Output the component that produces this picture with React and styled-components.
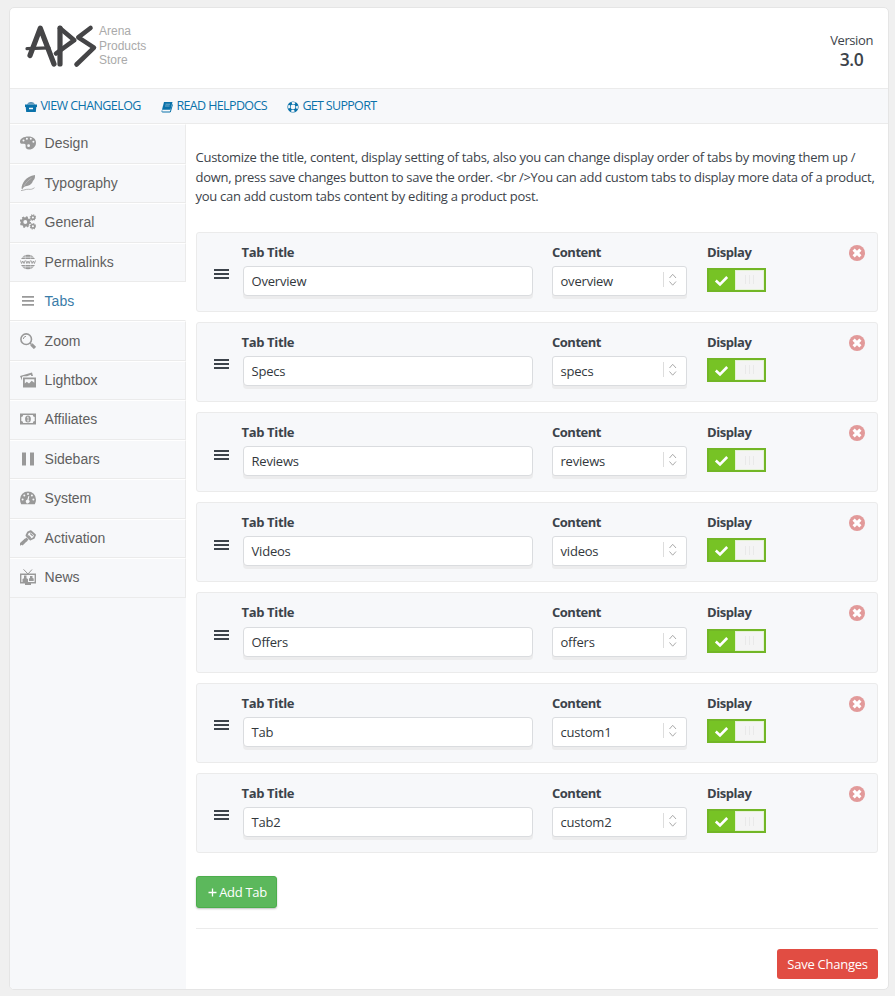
import React from 'react';
import styled, {createGlobalStyle} from 'styled-components';

const sans = `'Segoe UI', 'Open Sans', 'Noto Sans', sans-serif`;
const arial = `'Liberation Sans', Arial, sans-serif`;

const colors = {
  page: '#f0f0f0',
  panel: '#f7f8fa',
  line: '#ebebeb',
  text: '#3c434a',
  link: '#0a72aa',
  icon: '#999',
  green: '#77c325',
  red: '#e14d43',
};

const GlobalStyle = createGlobalStyle`
  *{box-sizing:border-box;}
  body{
    margin:0;
    background:${colors.page};
    color:${colors.text};
    font:13px/1.5 ${sans};
  }
`

const Panel = styled.div `
  width:880px;
  height:983px;
  margin:7px 0 6px 9px;
  background:#fff;
  border:1px solid #e5e5e5;
  border-radius:5px;
  overflow:hidden;
  display:flex;
  flex-direction:column;
`
const Head = styled.header `
  height:81px;
  flex:none;
  border-bottom:1px solid ${colors.line};
  display:flex;
  justify-content:space-between;
  padding:14px 15px 0 14px;
`
const Brand = styled.div `
  display:flex;
  svg{display:block;}
`
const BrandName = styled.div `
  font:12px/14.6px ${arial};
  color:#aaa;
  padding:2px 0 0 1px;
  span{display:block;}
`
const Version = styled.div `
  text-align:center;
  padding-top:8px;
  line-height:20px;
  letter-spacing:-0.4px;
  strong{
    display:block;
    font-size:17.5px;
    line-height:18px;
    font-weight:600;
  }
`
const Links = styled.nav `
  height:35px;
  flex:none;
  background:${colors.panel};
  border-bottom:1px solid ${colors.line};
  display:flex;
  padding:0 0 0 15px;
`
const Link = styled.a `
  display:flex;
  align-items:center;
  width:${p => p.$w}px;
  height:34px;
  color:${colors.link};
  font-size:12.5px;
  white-space:nowrap;
  letter-spacing:${p => p.$ls}px;
  svg{
    flex:none;
    margin:2px 3.4px 0 0;
  }
`
const Body = styled.div `
  display:flex;
  flex:1;
`
const Side = styled.aside `
  width:176px;
  flex:none;
  padding-top:.3px;
  background:${colors.panel};
`
const Item = styled.a `
  display:flex;
  align-items:center;
  height:39.45px;
  padding:0 0 1.3px 10px;
  border-top:1px solid #fff;
  border-bottom:1px solid ${colors.line};
  border-right:1px solid ${p => p.$active ? '#fff' : colors.line};
  background:${p => p.$active ? '#fff' : 'transparent'};
  color:${p => p.$active ? '#3a7ca8' : '#5f5f5f'};
  font:14px/20px ${arial};
  svg{
    flex:none;
    margin-right:8.6px;
    color:${colors.icon};
  }
`
const Main = styled.main `
  flex:1;
  min-width:0;
  padding:24px 10px 0;
`
const Intro = styled.p `
  margin:0 0 25px -0.5px;
  line-height:19.5px;
  white-space:nowrap;
  span{display:block;}
`
const Line = styled.span `
  letter-spacing:${p => p.$ls}px;
`
const Row = styled.div `
  display:flex;
  height:80.22px;
  margin-bottom:10px;
  padding:10px 12px 0 16px;
  background:${colors.panel};
  border:1px solid ${colors.line};
  border-radius:3px;
`
const Handle = styled.div `
  width:15px;
  height:10px;
  margin:26.6px 13px 0 1px;
  display:flex;
  flex-direction:column;
  justify-content:space-between;
  i{
    height:2px;
    background:${colors.text};
  }
`
const Field = styled.div `
  width:${p => p.$w}px;
  flex:none;
`
const Label = styled.label `
  display:block;
  height:23.2px;
  line-height:18px;
  margin-left:${p => p.$shift || 0}px;
  font-weight:700;
  letter-spacing:${p => p.$ls}px;
`
const Input = styled.div `
  width:290px;
  height:30px;
  margin-left:1px;
  padding:0 7.5px;
  line-height:29px;
  background:#fff;
  border:1px solid #dadcdf;
  border-radius:4px;
  box-shadow:0 3px 0 #ececed;
  letter-spacing:-0.2px;
  color:#32373c;
`
const Select = styled(Input) `
  width:135px;
  margin-left:0;
  border-radius:3px;
  display:flex;
  justify-content:space-between;
  padding-right:7px;
  svg{
    margin:4px 0 0;
  }
`
const Toggle = styled.div `
  width:59px;
  height:24px;
  margin-top:2px;
  border:2px solid #72b626;
  background:${colors.green};
  display:flex;
  justify-content:space-between;
  svg{margin:5px 0 0 5px;}
`
const Knob = styled.div `
  width:29px;
  height:20px;
  background:#f4f4f4;
  border:1px solid #e4f3d4;
  display:flex;
  align-items:center;
  justify-content:center;
  gap:3px;
  i{
    width:1px;
    height:9px;
    background:#e9e9e9;
  }
`
const Remove = styled.div `
  margin:2px 0 0 auto;
  height:16px;
  svg{display:block;}
`
const AddButton = styled.button `
  display:block;
  width:81px;
  height:32px;
  margin:23px 0 20px;
  padding:0 0 0 2px;
  background:#5cb85c;
  border:1px solid #4cae4c;
  border-radius:3px;
  box-shadow:0 1px 2px rgba(0,0,0,.25);
  color:#fff;
  font:13px ${sans};
  letter-spacing:-0.3px;
  white-space:nowrap;
  svg{margin-right:2px;}
`
const Footer = styled.div `
  border-top:1px solid ${colors.line};
  padding-top:20px;
  display:flex;
  justify-content:flex-end;
`
const SaveButton = styled.button `
  width:101px;
  height:30px;
  padding:0;
  background:${colors.red};
  border:0;
  border-radius:3px;
  color:#fff;
  font:13px ${sans};
  letter-spacing:-0.25px;
  white-space:nowrap;
`

const Logo = () => (
  <svg width="74" height="50" viewBox="24 22 74 50" fill="none" stroke="#454547" strokeWidth="5.200" strokeLinecap="round" strokeLinejoin="round">
    <path d="M30 55.500L40.300 28.200L54 64"/>
    <path d="M27 48.600L49 47.800" strokeWidth="3.200"/>
    <path d="M60 64V28.200"/>
    <path d="M60 28.200L74.300 40.200L56 53.500" strokeWidth="4.600"/>
    <path d="M90.500 28L78.300 37.300L94 47.600L76.500 64.500" strokeWidth="4.600"/>
  </svg>
);

const Icon = ({children, w = 16, h = 16}) => (
  <svg width={w} height={h} viewBox={`0 0 ${w} ${h}`} fill="currentColor">{children}</svg>
);

const icons = {
  palette: <path fillRule="evenodd" d="M8.500 1.500C3.500 1.500 0 3.600 0 6.700C0 8.500 1.500 9 3.500 8.800C5.600 8.600 5.800 9.700 5.600 11C5.300 13 6.600 14.500 9 14.500C13 14.500 16 11.500 16 7.700C16 4 13 1.500 8.500 1.500ZM2.500 5.600a1 1 0 1 0 2 0a1 1 0 1 0-2 0M5.900 3.700a1 1 0 1 0 2 0a1 1 0 1 0-2 0M9.800 3.800a1 1 0 1 0 2 0a1 1 0 1 0-2 0M12.400 6.700a1 1 0 1 0 2 0a1 1 0 1 0-2 0M7.200 10.700a1.400 1.400 0 1 0 2.800 0a1.400 1.400 0 1 0-2.800 0"/>,
  feather: <>
    <path d="M1.500 13.200C2 8 5.500 1.500 15 0C15.300 3.500 14 5 12.900 5.900C12.500 8 10.500 10.300 7 11C5 11.300 3.700 11.500 2.200 14.500Z"/>
    <path d="M4 11C6 7.500 8.500 5 11.500 3.200" stroke="#c4c5c7" strokeWidth=".6" fill="none"/>
    <path d="M1 15.600C4 15.300 6 14 8.500 14.300C11 14.600 12.500 14.200 14.500 12.700" stroke="currentColor" strokeWidth=".7" fill="none"/>
  </>,
  gears: <g fill="none" stroke="currentColor">
    <circle cx="5.300" cy="8" r="3.300" strokeWidth="2.700"/>
    <circle cx="5.300" cy="8" r="4.800" strokeWidth="1.800" strokeDasharray="1.950 1.820"/>
    <circle cx="12.900" cy="3.500" r="1.800" strokeWidth="1.500"/>
    <circle cx="12.900" cy="3.500" r="2.700" strokeWidth="1.100" strokeDasharray="1.100 1.020"/>
    <circle cx="12.900" cy="12.300" r="1.800" strokeWidth="1.500"/>
    <circle cx="12.900" cy="12.300" r="2.700" strokeWidth="1.100" strokeDasharray="1.100 1.020"/>
  </g>,
  www: <>
    <path d="M1.100 5A7.700 7.700 0 0 1 14.900 5ZM1.100 11A7.700 7.700 0 0 0 14.900 11Z"/>
    <path d="M2 3.200H14M2 12.800H14" stroke="#f7f8fa" strokeWidth=".7"/>
    <path d="M5.300 1V5M10.700 1V5M5.300 11V15M10.700 11V15" stroke="#f7f8fa" strokeWidth=".4"/>
    <path d="M.5 6.500L1.600 9.500L2.800 7L4 9.500L5.100 6.500M5.800 6.500L6.900 9.500L8 7L9.200 9.500L10.300 6.500M11 6.500L12.100 9.500L13.300 7L14.400 9.500L15.500 6.500" stroke="currentColor" strokeWidth=".9" fill="none"/>
  </>,
  bars: <path d="M2 3h12v1.700H2zM2 7h12v1.700H2zM2 11h12v1.700H2z"/>,
  zoom: <g fill="none" stroke="currentColor">
    <circle cx="6.200" cy="6.200" r="5.300" strokeWidth="1.600"/>
    <path d="M3.300 6A3 3 0 0 1 6 3.300"/>
    <path d="M10 10L11.500 11.500" strokeWidth="1.500"/>
    <path d="M11.400 11.400L15 15" strokeWidth="3.200"/>
  </g>,
  images: <>
    <path fillRule="evenodd" d="M3 5.500H16V15.500H3ZM4.800 7.300V11.500L6.800 9.800L9 11.400L11.700 8.700L14.300 10.800V7.300Z"/>
    <path d="M0 4L12 .5L13 4H11.300L10.800 2.800L7 4.300H3.200L2 5V8.500Z"/>
  </>,
  money: <>
    <path fillRule="evenodd" d="M0 2.500H16V13.500H0ZM3.200 4A2.200 2.200 0 0 1 1.300 6V10A2.200 2.200 0 0 1 3.200 12H12.800A2.200 2.200 0 0 1 14.700 10V6A2.200 2.200 0 0 1 12.800 4Z"/>
    <ellipse cx="8" cy="8" rx="2.900" ry="3.500"/>
    <path d="M7.100 6.500L8.100 5.900V9.700M7 9.900H9.200" stroke="#f7f8fa" strokeWidth=".8" fill="none"/>
  </>,
  pause: <path d="M2 1.500h4v13H2zM10 1.500h4v13h-4z"/>,
  gauge: <path fillRule="evenodd" d="M8 1.500A8 8 0 0 0 0 9.500C0 11.200.5 12.800 1.200 14.200H14.800C15.500 12.800 16 11.200 16 9.500A8 8 0 0 0 8 1.500ZM1.600 9.500a1 1 0 1 0 2 0a1 1 0 1 0-2 0M3.300 5.600a1 1 0 1 0 2 0a1 1 0 1 0-2 0M7 4a1 1 0 1 0 2 0a1 1 0 1 0-2 0M10.900 5.600a1 1 0 1 0 2 0a1 1 0 1 0-2 0M12.400 9.500a1 1 0 1 0 2 0a1 1 0 1 0-2 0M9.300 6.200L8.600 10A1.800 1.800 0 1 1 7.300 9.800L8.400 6Z"/>,
  key: <>
    <path d="M1.500 14.500L7.500 8.500" stroke="currentColor" strokeWidth="3"/>
    <path d="M0 15.800V13L5 8.500L7.500 11L5 12L4 13.500Z"/>
    <path d="M6.500 5.500L8 2.300L10.800 1.200L15 5L13.800 8L10.500 9.500Z" fill="none" stroke="currentColor" strokeWidth="1.900" strokeLinejoin="round"/>
    <path d="M8.300 5.500L10.700 7.900M10.300 3.500L12.700 5.900" stroke="currentColor" strokeWidth="1.300"/>
  </>,
  tv: <>
    <path d="M3.500 .3L8 5L12 .5" fill="none" stroke="currentColor"/>
    <path fillRule="evenodd" d="M0 4.500H16V14.500H0ZM1.400 5.900V13H14.600V5.900Z"/>
    <path d="M2.500 13V10L4 9.200V6.500H6.500V9.200L8 10V13ZM9 12V9.600L10 9V7H12.500V9L13.700 9.600V12Z"/>
    <path d="M5 14H11V16H5Z"/>
  </>,
};

const menu = [
  ['Design', 'palette'],
  ['Typography', 'feather'],
  ['General', 'gears'],
  ['Permalinks', 'www'],
  ['Tabs', 'bars'],
  ['Zoom', 'zoom'],
  ['Lightbox', 'images'],
  ['Affiliates', 'money'],
  ['Sidebars', 'pause'],
  ['System', 'gauge'],
  ['Activation', 'key'],
  ['News', 'tv'],
];

const tabs = [
  ['Overview', 'overview'],
  ['Specs', 'specs'],
  ['Reviews', 'reviews'],
  ['Videos', 'videos'],
  ['Offers', 'offers'],
  ['Tab', 'custom1'],
  ['Tab2', 'custom2'],
];

const TabRow = ({title, content}) => (
  <Row>
    <Handle><i/><i/><i/></Handle>
    <Field $w={310}>
      <Label $ls={-0.35} $shift={-0.5}>Tab Title</Label>
      <Input>{title}</Input>
    </Field>
    <Field $w={155}>
      <Label $ls={-0.5}>Content</Label>
      <Select>
        {content}
        <svg width="16" height="18" fill="none" stroke="#aaa">
          <path d="M.5 1V16" stroke="#ddd"/>
          <path d="M6.500 7L9.700 3.300L13 7M6.500 10.500L9.700 14.200L13 10.500"/>
        </svg>
      </Select>
    </Field>
    <Field $w={60}>
      <Label $ls={-0.45}>Display</Label>
      <Toggle>
        <svg width="15" height="12" fill="none" stroke="#fff" strokeWidth="2.600">
          <path d="M1.800 5.500L6 9.500L13.200 2"/>
        </svg>
        <Knob><i/><i/><i/></Knob>
      </Toggle>
    </Field>
    <Remove>
      <svg width="16" height="16">
        <circle cx="8" cy="8" r="8" fill="#e29a9a"/>
        <path d="M4.600 4.600L11.400 11.400M11.400 4.600L4.600 11.400" stroke="#fff" strokeWidth="3.100"/>
      </svg>
    </Remove>
  </Row>
);

const App = () => (
  <>
    <GlobalStyle/>
    <Panel>
      <Head>
        <Brand>
          <Logo/>
          <BrandName><span>Arena</span><span>Products</span><span>Store</span></BrandName>
        </Brand>
        <Version>Version<strong>3.0</strong></Version>
      </Head>
      <Links>
        <Link $w={136} $ls={-0.57}>
          <Icon w={12} h={12}>
            <path d="M2.500 3.500C3 .8 9 .8 9.500 3.500" fill="#6b9dbc" stroke="#5b93b6"/>
            <path fillRule="evenodd" d="M0 3.500H12V6H11.300L10.800 11H1.200L.7 6H0ZM4 6.800V8.200H8V6.800Z"/>
          </Icon>
          VIEW CHANGELOG
        </Link>
        <Link $w={126} $ls={-0.62}>
          <Icon w={12} h={12}>
            <path d="M3 1H11.500L9.500 8.800H1Z"/>
            <path d="M1 9.500C.5 10.500 1 11 2 11H9.300L11.500 3.500" fill="none" stroke="currentColor"/>
            <path d="M4.500 3.200H9M4 5H8.500" stroke="#8fbad2" strokeWidth=".8"/>
          </Icon>
          READ HELPDOCS
        </Link>
        <Link $w={110} $ls={-0.68}>
          <Icon w={12} h={12}>
            <circle cx="6" cy="6" r="4" fill="none" stroke="currentColor" strokeWidth="3.200"/>
            <circle cx="6" cy="6" r="4" fill="none" stroke="#f7f8fa" strokeWidth="1.800" strokeDasharray="3.300 2.983" strokeDashoffset="1.650"/>
          </Icon>
          GET SUPPORT
        </Link>
      </Links>
      <Body>
        <Side>
          {menu.map(([name, icon]) => (
            <Item key={name} $active={name === 'Tabs'}>
              <Icon>{icons[icon]}</Icon>
              {name}
            </Item>
          ))}
        </Side>
        <Main>
          <Intro>
            <Line $ls={-0.265}>Customize the title, content, display setting of tabs, also you can change display order of tabs by moving them up /</Line>
            <Line $ls={-0.29}>down, press save changes button to save the order. &lt;br /&gt;You can add custom tabs to display more data of a product,</Line>
            <Line $ls={-0.28}>you can add custom tabs content by editing a product post.</Line>
          </Intro>
          {tabs.map(([title, content]) => (
            <TabRow key={title} title={title} content={content}/>
          ))}
          <AddButton>
            <svg width="9" height="9" stroke="#fff" strokeWidth="1.300"><path d="M4.500 .5V8.500M.5 4.500H8.500"/></svg>
            Add Tab
          </AddButton>
          <Footer>
            <SaveButton>Save Changes</SaveButton>
          </Footer>
        </Main>
      </Body>
    </Panel>
  </>
);

export default App;
